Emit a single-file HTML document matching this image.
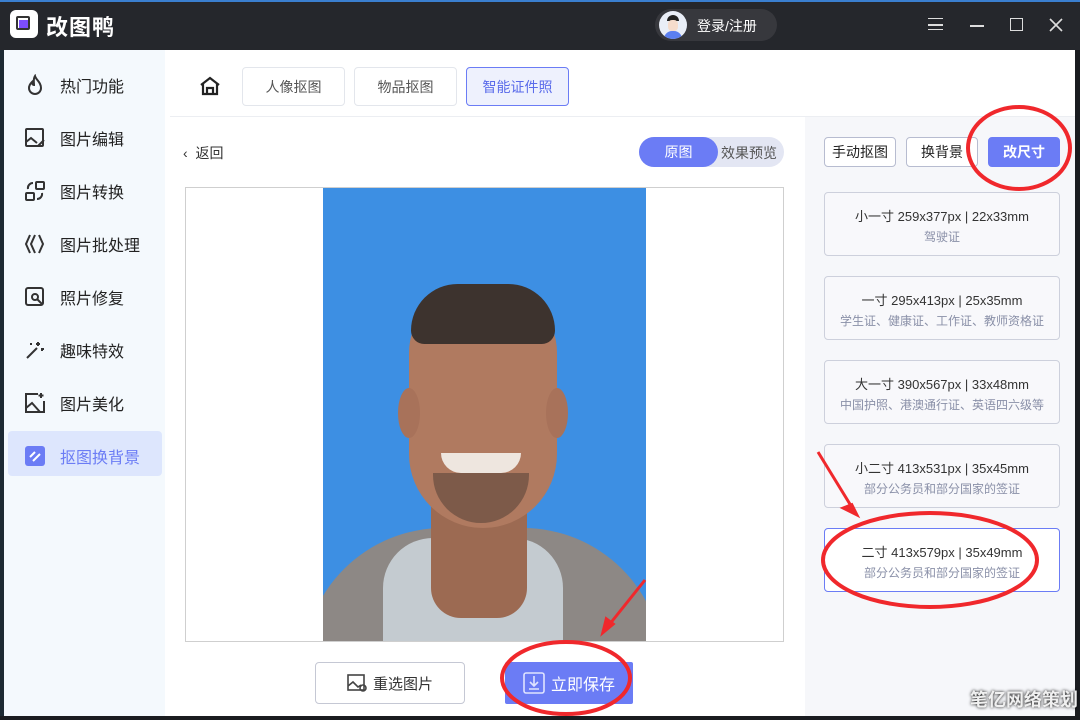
<!DOCTYPE html>
<html><head><meta charset="utf-8">
<style>
*{margin:0;padding:0;box-sizing:border-box}
html,body{width:1080px;height:720px;overflow:hidden}
body{background:#1d2a33;font-family:"Liberation Sans","Noto Sans CJK SC",sans-serif;position:relative}
.abs{position:absolute}
.title{left:0;top:0;width:1080px;height:50px;background:#25272c;border-top:2px solid #3a7fd0}
.side{left:4px;top:50px;width:161px;height:666px;background:#f4f9fd}
.main{left:165px;top:50px;width:910px;height:666px;background:#fff}
.item{position:absolute;left:24px;font-size:16px;color:#222;display:flex;align-items:center}
.item svg{margin-right:14px}
.tab{position:absolute;top:67px;height:39px;border:1px solid #e3e6ec;border-radius:4px;font-size:14px;color:#555;display:flex;align-items:center;justify-content:center;background:#fff}
.card{position:absolute;left:824px;width:236px;height:64px;border:1px solid #cdd0dc;border-radius:4px;background:#f8f8fb;text-align:center;font-size:13px;color:#333;padding-top:13px}
.card div{font-size:12px;color:#8a90a8;margin-top:3px}
.btn{position:absolute;top:137px;height:30px;border:1px solid #b7bcd0;border-radius:4px;background:#fff;font-size:14px;color:#222;display:flex;align-items:center;justify-content:center}
</style></head><body>
<div class="abs title"></div>
<div class="abs" style="left:10px;top:10px;width:28px;height:28px;background:#fff;border-radius:6px"></div>
<div class="abs" style="left:16px;top:16px;width:14px;height:14px;border:2px solid #333;border-radius:2px"></div>
<div class="abs" style="left:19px;top:20px;width:9px;height:8px;background:#7c4dff"></div>
<div class="abs" style="left:46px;top:10px;font-size:22px;color:#fff;font-weight:bold;letter-spacing:1px">改图鸭</div>
<div class="abs" style="left:655px;top:9px;width:122px;height:32px;background:#37383d;border-radius:16px"></div>
<div class="abs" style="left:659px;top:11px;width:28px;height:28px;background:#e9eef7;border-radius:50%;overflow:hidden"><div style="position:absolute;left:5px;top:20px;width:18px;height:10px;background:#5b7ff0;border-radius:8px 8px 0 0"></div><div style="position:absolute;left:8px;top:4px;width:12px;height:6px;background:#222;border-radius:6px 6px 0 0"></div><div style="position:absolute;left:9px;top:9px;width:10px;height:11px;background:#f5dccc;border-radius:4px"></div></div>
<div class="abs" style="left:697px;top:16px;font-size:14px;color:#fff">登录/注册</div>
<div class="abs" style="left:928px;top:18px;width:15px;height:12px;border-top:1.5px solid #ddd;border-bottom:1.5px solid #ddd"></div>
<div class="abs" style="left:928px;top:24px;width:15px;height:1.5px;background:#ddd"></div>
<div class="abs" style="left:970px;top:25px;width:14px;height:1.5px;background:#ddd"></div>
<div class="abs" style="left:1010px;top:18px;width:13px;height:13px;border:1.5px solid #ddd"></div>
<svg class="abs" style="left:1049px;top:18px" width="14" height="14" stroke="#ddd" stroke-width="1.6"><path d="M1 1l12 12M13 1L1 13"/></svg>

<div class="abs side"></div>
<div class="abs main"></div>
<div class="abs" style="left:1075px;top:50px;width:5px;height:670px;background:#1a1c20"></div>
<div class="abs" style="left:0;top:716px;width:1080px;height:4px;background:#1a1c20"></div>

<div class="item" style="top:73px"><svg width="22" height="22" viewBox="0 0 22 22" fill="none" stroke="#333" stroke-width="2"><path d="M11 2c1 4 6 6 6 12a6 6 0 0 1-12 0c0-3 2-5 3-6 0 2 1 3 2 3 0-3-1-6 1-9z"/></svg>热门功能</div>
<div class="item" style="top:126px"><svg width="22" height="22" viewBox="0 0 22 22" fill="none" stroke="#333" stroke-width="2"><rect x="2" y="2" width="17" height="17" rx="1"/><path d="M2 15l5-4 6 5M14 19l6-6"/></svg>图片编辑</div>
<div class="item" style="top:179px"><svg width="22" height="22" viewBox="0 0 22 22" fill="none" stroke="#333" stroke-width="2"><rect x="12" y="2" width="8" height="7" rx="1"/><rect x="2" y="13" width="8" height="7" rx="1"/><path d="M4 9a5 5 0 0 1 5-6M18 13a5 5 0 0 1-5 6"/></svg>图片转换</div>
<div class="item" style="top:232px"><svg width="22" height="22" viewBox="0 0 22 22" fill="none" stroke="#333" stroke-width="2"><path d="M6 2l-4 9 4 9M11 2l-4 9 4 9M15 2l4 9-4 9"/></svg>图片批处理</div>
<div class="item" style="top:285px"><svg width="22" height="22" viewBox="0 0 22 22" fill="none" stroke="#333" stroke-width="2"><rect x="2" y="2" width="17" height="17" rx="2"/><circle cx="11" cy="11" r="3"/><path d="M13 13l5 5"/></svg>照片修复</div>
<div class="item" style="top:338px"><svg width="22" height="22" viewBox="0 0 22 22" fill="none" stroke="#333" stroke-width="2"><path d="M3 19L13 9M14 3v4M12 5h4M18 9v3M17 10h3M7 4v2"/></svg>趣味特效</div>
<div class="item" style="top:391px"><svg width="22" height="22" viewBox="0 0 22 22" fill="none" stroke="#333" stroke-width="2"><path d="M14 2H2v18h18V9"/><path d="M2 16l6-5 8 9M17 1v5M14.5 3.5h5"/></svg>图片美化</div>
<div class="abs" style="left:8px;top:431px;width:154px;height:45px;background:#dde6fd;border-radius:4px"></div>
<div class="item" style="top:444px;color:#6b7cf5"><svg width="22" height="22" viewBox="0 0 22 22"><rect x="1" y="1" width="20" height="20" rx="3" fill="#6b7cf5"/><path d="M6 12l5-5M9 16l7-7" stroke="#fff" stroke-width="2"/></svg>抠图换背景</div>

<div class="abs" style="left:170px;top:116px;width:905px;height:1px;background:#eceef2"></div>
<svg class="abs" style="left:199px;top:75px" width="22" height="22" viewBox="0 0 22 22" fill="none" stroke="#222" stroke-width="2.2"><path d="M2 10L11 3l9 7M4 8v11h14V8M8 19v-6h6v6"/></svg>
<div class="tab" style="left:242px;width:103px">人像抠图</div>
<div class="tab" style="left:354px;width:103px">物品抠图</div>
<div class="tab" style="left:466px;width:103px;background:#eef1fd;border-color:#6b7cf5;color:#5a6bea">智能证件照</div>

<div class="abs" style="left:805px;top:117px;width:270px;height:599px;background:#f6f7fa"></div>
<div class="abs" style="left:183px;top:143px;font-size:14px;color:#333">‹&nbsp; 返回</div>
<div class="abs" style="left:639px;top:137px;width:145px;height:30px;background:#e3e6f3;border-radius:15px"></div>
<div class="abs" style="left:639px;top:137px;width:79px;height:30px;background:#6b7cf5;border-radius:15px;color:#fff;font-size:14px;text-align:center;line-height:30px">原图</div>
<div class="abs" style="left:721px;top:143px;font-size:14px;color:#555">效果预览</div>

<div class="abs" style="left:185px;top:187px;width:599px;height:455px;border:1px solid #cfcfcf;background:#fff"></div>
<div class="abs" style="left:323px;top:188px;width:323px;height:453px;background:#3d8fe3;overflow:hidden">
 <div style="position:absolute;left:-20px;top:340px;width:360px;height:160px;background:#8d8885;border-radius:140px 140px 0 0"></div>
 <div style="position:absolute;left:60px;top:350px;width:180px;height:110px;background:#c4cbd0;border-radius:50px 50px 0 0"></div>
 <div style="position:absolute;left:108px;top:290px;width:96px;height:140px;background:#9c6a52;border-radius:30px"></div>
 <div style="position:absolute;left:86px;top:100px;width:148px;height:240px;background:#b07a60;border-radius:70px 70px 80px 80px"></div>
 <div style="position:absolute;left:75px;top:200px;width:22px;height:50px;background:#a8725a;border-radius:50%"></div>
 <div style="position:absolute;left:223px;top:200px;width:22px;height:50px;background:#a8725a;border-radius:50%"></div>
 <div style="position:absolute;left:88px;top:96px;width:144px;height:60px;background:#3d332e;border-radius:70px 70px 20px 20px"></div>
 <div style="position:absolute;left:118px;top:265px;width:80px;height:20px;background:#eee6df;border-radius:0 0 40px 40px"></div>
 <div style="position:absolute;left:110px;top:285px;width:96px;height:50px;background:#4a3a32;opacity:.5;border-radius:0 0 50px 50px"></div>
</div>

<div class="abs" style="left:315px;top:662px;width:150px;height:42px;border:1px solid #c5c8d4;border-radius:4px;background:#fff;font-size:15px;color:#333;display:flex;align-items:center;justify-content:center"><svg width="20" height="18" viewBox="0 0 20 18" fill="none" stroke="#444" stroke-width="1.6" style="margin-right:6px"><rect x="1" y="1" width="16" height="15"/><path d="M1 12l5-4 5 5 3-2"/><circle cx="16" cy="14" r="3"/></svg>重选图片</div>
<div class="abs" style="left:505px;top:662px;width:128px;height:42px;background:#6b7cf5;border-radius:2px;font-size:16px;color:#fff;display:flex;align-items:center;justify-content:center"><svg width="22" height="22" viewBox="0 0 22 22" fill="none" stroke="#dfe3ff" stroke-width="1.6" style="margin-right:6px"><rect x="1" y="1" width="20" height="20" rx="2"/><path d="M11 4v10M7 10l4 4 4-4M6 17h10"/></svg>立即保存</div>

<div class="btn" style="left:824px;top:137px;width:72px">手动抠图</div>
<div class="btn" style="left:906px;width:72px">换背景</div>
<div class="btn" style="left:988px;width:72px;background:#6b7cf5;border-color:#6b7cf5;color:#fff;font-weight:bold">改尺寸</div>

<div class="card" style="top:192px">小一寸 259x377px | 22x33mm<div>驾驶证</div></div>
<div class="card" style="top:276px">一寸 295x413px | 25x35mm<div>学生证、健康证、工作证、教师资格证</div></div>
<div class="card" style="top:360px">大一寸 390x567px | 33x48mm<div>中国护照、港澳通行证、英语四六级等</div></div>
<div class="card" style="top:444px">小二寸 413x531px | 35x45mm<div>部分公务员和部分国家的签证</div></div>
<div class="card" style="top:528px;border-color:#6b7cf5;background:#fff">二寸 413x579px | 35x49mm<div>部分公务员和部分国家的签证</div></div>

<svg class="abs" style="left:0;top:0" width="1080" height="720" fill="none" stroke="#f0282c" stroke-width="4">
<ellipse cx="1019" cy="148" rx="51" ry="41"/>
<ellipse cx="930" cy="560" rx="107" ry="47"/>
<ellipse cx="566" cy="678" rx="64" ry="36"/>
<path d="M818 452l38 62" stroke-width="3"/><path d="M858 516l-16-8 10-4z" fill="#f0282c" stroke-width="2"/>
<path d="M645 580l-40 50" stroke-width="3"/><path d="M602 634l4-16 8 6z" fill="#f0282c" stroke-width="2"/>
</svg>
<div class="abs" style="left:970px;top:686px;font-size:18px;color:#f0f0f0;font-weight:bold;white-space:nowrap;text-shadow:0 0 3px #000">笔亿网络策划</div>
</body></html>
